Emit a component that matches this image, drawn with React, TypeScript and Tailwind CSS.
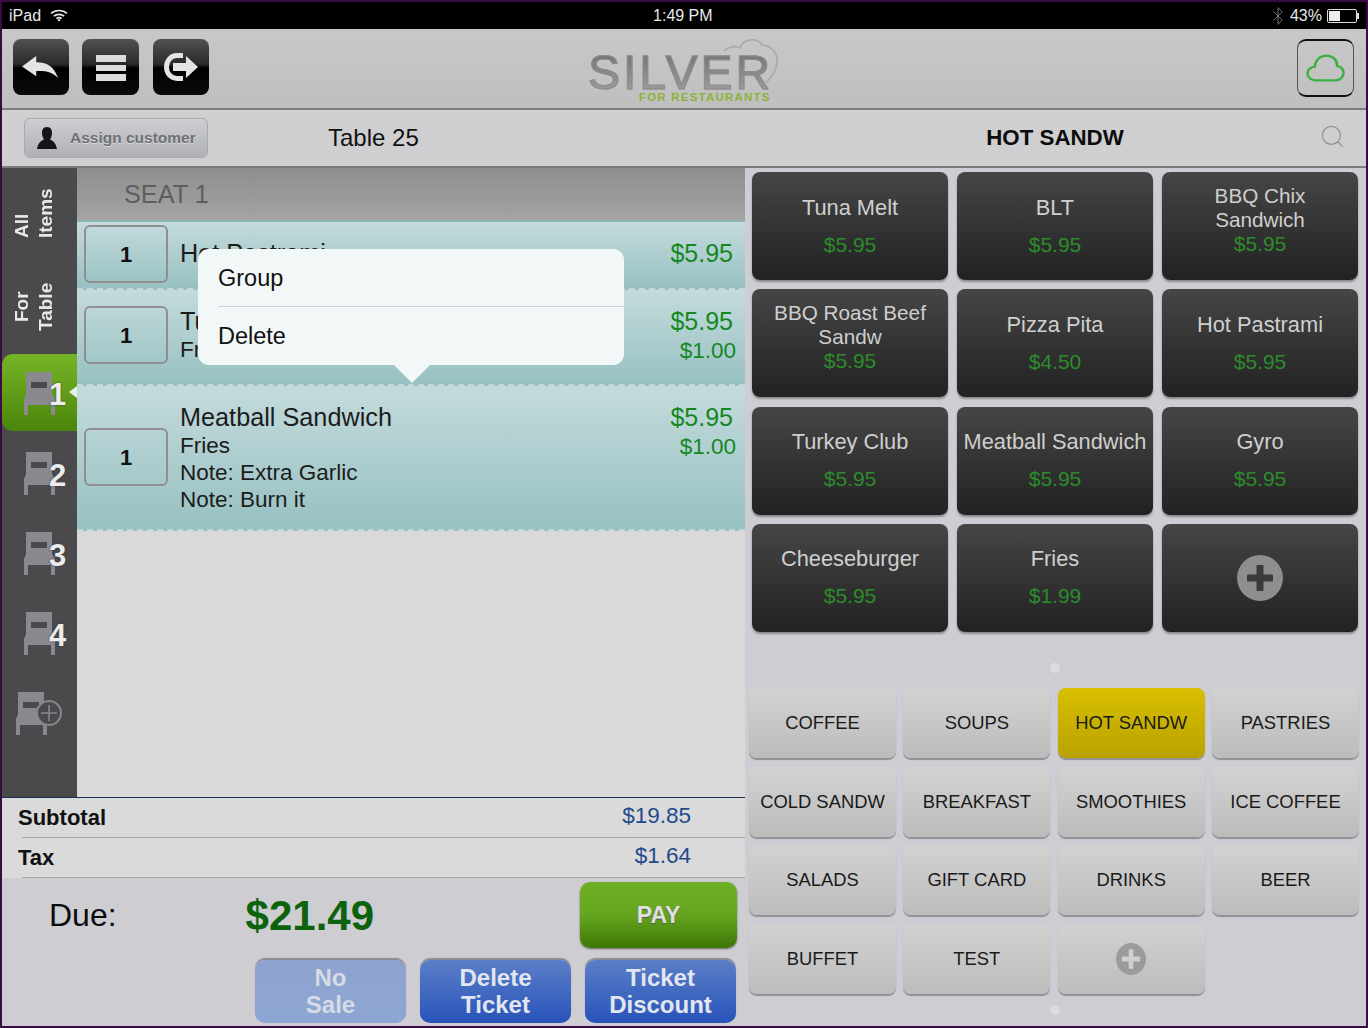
import React from "react";
import { Bluetooth, Search } from "lucide-react";

const Chair = () => (
  <svg width="32" height="43" viewBox="0 0 32 43" className="block">
    <path d="M3 0H29V22L32 27V43H28V33H5V43H1V27L3 22Z" fill="#8a8a8e" />
    <rect x="8" y="10" width="16" height="6" fill="#4a4a4c" />
  </svg>
);

const Seat = ({ n, active }: { n: number; active?: boolean }) => (
  <div
    className={
      active
        ? "relative h-[77px] pt-[18px] pl-[21px] rounded-l-[11px] bg-gradient-to-b from-[#75b526] to-[#4c860a]"
        : "relative h-[80px] pt-[21px] pl-[21px]"
    }
  >
    <Chair />
    <span
      className={
        "absolute left-[47px] text-[31px] leading-[31px] font-bold text-[#ececec] [text-shadow:0_0_2px_#333] " +
        (active ? "top-[25px]" : "top-[29px]")
      }
    >
      {n}
    </span>
    {active && (
      <span className="absolute right-0 top-[32px] border-y-[6px] border-r-[8px] border-y-transparent border-r-[#e4efe8]" />
    )}
  </div>
);

const Row = ({
  h,
  boxTop,
  lines,
  prices,
}: {
  h: string;
  boxTop: string;
  lines: string[];
  prices: string[];
}) => (
  <div
    className={
      "flex bg-gradient-to-b bg-origin-border from-[#c4dbdc] to-[#97c0c2] border-b-2 border-dashed border-[#c4d8d8] pl-[7px] pr-[9px] pt-[16px] " + h
    }
  >
    <div
      className={
        "w-[84px] h-[58px] shrink-0 border-2 border-[#8f8f8f] rounded-[6px] flex items-center justify-center text-[22px] font-bold text-[#111] " +
        boxTop
      }
    >
      1
    </div>
    <div className="ml-[12px] flex-1 text-[#1c1c1c]">
      {lines.map((l, i) => (
        <div key={l} className={i === 0 ? "text-[25.25px] leading-[30px]" : "text-[22.5px] leading-[27px]"}>
          {l}
        </div>
      ))}
    </div>
    <div className="text-right text-[#14881f]">
      {prices.map((p, i) => (
        <div key={p} className={i === 0 ? "text-[25px] leading-[30px] pr-[3px]" : "text-[22.5px] leading-[27px] pt-[1px]"}>
          {p}
        </div>
      ))}
    </div>
  </div>
);

const Product = ({ name, price }: { name: string; price: string }) => (
  <div className="h-[108px] rounded-[8px] bg-gradient-to-b from-[#464646] to-[#222222] shadow-[0_2px_2px_#8a8a8e] flex flex-col items-center justify-center text-center">
    <div className="text-[#cfcfcf] text-[21.8px] leading-[24px] max-w-[190px] whitespace-nowrap">{name}</div>
    <div className="text-[#2c8c2c] text-[21px] leading-[24px] mt-[13px]">{price}</div>
  </div>
);

const Product2 = ({ name, price }: { name: string[]; price: string }) => (
  <div className="h-[108px] rounded-[8px] bg-gradient-to-b from-[#464646] to-[#222222] shadow-[0_2px_2px_#8a8a8e] flex flex-col items-center pt-[12px] text-center">
    {name.map((n) => (
      <div key={n} className="text-[#cfcfcf] text-[20.7px] leading-[24px]">
        {n}
      </div>
    ))}
    <div className="text-[#2c8c2c] text-[21px] leading-[24px]">{price}</div>
  </div>
);

const PlusDisc = ({ w, h, bg, fg, t, l }: { w: number; h: number; bg: string; fg: string; t: number; l: number }) => (
  <svg width={w} height={h} viewBox="0 0 46 46" preserveAspectRatio="none">
    <circle cx="23" cy="23" r="23" fill={bg} />
    <rect x={23 - l / 2} y={23 - t / 2} width={l} height={t} rx="1" fill={fg} />
    <rect x={23 - t / 2} y={23 - l / 2} width={t} height={l} rx="1" fill={fg} />
  </svg>
);

const catBase = "h-[70px] rounded-[8px] shadow-[0_2px_1px_#8f8f95] flex items-center justify-center text-[18.4px] text-[#1a1a1a]";
const Cat = ({ name, active }: { name: string; active?: boolean }) => (
  <div className={catBase + (active ? " bg-gradient-to-b from-[#d8bf00] to-[#b9a200]" : " bg-gradient-to-b from-[#d2d2d2] to-[#bcbcbc]")}>
    {name}
  </div>
);

const BlueBtn = ({ a, b, off }: { a: string; b: string; off?: boolean }) => (
  <div
    className={
      "w-[151px] h-[63px] pb-[2px] rounded-[10px] flex flex-col items-center justify-center text-[24px] leading-[27px] font-bold shadow-[0_-2px_1px_#8c8c90] " +
      (off ? "bg-gradient-to-b from-[#8ea3cf] to-[#8ea6d4] text-[#d6dbe6]" : "bg-gradient-to-b from-[#5c7ec7] to-[#2753b9] text-[#e2e6ee]")
    }
  >
    <span>{a}</span>
    <span>{b}</span>
  </div>
);

const NavBtn = ({ w, children }: { w: string; children: React.ReactNode }) => (
  <div className={"h-[56px] rounded-[8px] bg-[linear-gradient(#525252,#2a2a2a_45%,#000_52%,#0a0a0a)] flex items-center justify-center " + w}>
    {children}
  </div>
);

export default function App() {
  return (
    <div className="w-[1368px] h-[1028px] bg-[#3a0a44] p-[2px] overflow-hidden font-['Liberation_Sans',Arial,sans-serif]">
      <div className="w-[1364px] h-[1024px] flex flex-col">
        {/* status bar */}
        <div className="h-[27px] bg-black text-[#e8e8e8] text-[16px] flex items-center pl-[7px] pr-[9px] shrink-0">
          <span>iPad</span>
          <svg width="18" height="13" viewBox="0 0 18 13" className="ml-[9px]">
            <path d="M1 4.5C5.5 .5 12.5 .5 17 4.5M3.8 7.2C6.8 4.7 11.2 4.7 14.2 7.2M6.4 9.6C8 8.4 10 8.4 11.6 9.6" fill="none" stroke="#e8e8e8" strokeWidth="1.6" />
            <path d="M7.4 11 9 9.8 10.6 11 9 12.6Z" fill="#e8e8e8" />
          </svg>
          <span className="ml-[585px]">1:49 PM</span>
          <Bluetooth size={20} strokeWidth={1} className="ml-auto text-[#8c8c8c]" />
          <span className="ml-[2px]">43%</span>
          <div className="ml-[5px] w-[30px] h-[14px] border border-[#ddd] rounded-[2px] p-[1px] relative">
            <div className="w-[11px] h-full bg-[#eee]" />
            <span className="absolute right-[-3px] top-[3px] w-[2px] h-[6px] bg-[#ddd]" />
          </div>
        </div>

        {/* header */}
        <div className="h-[81px] shrink-0 bg-gradient-to-b from-[#c8c8c8] to-[#bfbfbf] border-b-2 border-[#7d7d7d] flex items-center pl-[11px] pr-[10px]">
          <div className="flex items-center -mt-[3px]">
            <NavBtn w="w-[56px]">
              <svg width="38" height="23" viewBox="0 0 40 26" preserveAspectRatio="none">
                <path d="M0 12 15 0V7C28 7 34 13 38 25 32 18 25 16.5 15 17V23Z" fill="#e4e4e4" />
              </svg>
            </NavBtn>
            <div className="w-[57px] ml-[13px]">
              <NavBtn w="w-[57px]">
                <div className="flex flex-col gap-[3px] mt-[1px]">
                  <div className="w-[30px] h-[7px] bg-[#dcdcdc]" />
                  <div className="w-[30px] h-[6px] bg-[#dcdcdc]" />
                  <div className="w-[30px] h-[7px] bg-[#dcdcdc]" />
                </div>
              </NavBtn>
            </div>
            <div className="ml-[14px]">
              <NavBtn w="w-[56px]">
                <svg width="36" height="30" viewBox="0 0 36 30">
                  <path d="M20 3.500H14C8 3.500 3.500 8.500 3.500 15S8 26.500 14 26.500H20" fill="none" stroke="#e4e4e4" strokeWidth="5" />
                  <path d="M10 11H23V4L35 15 23 26V19H10Z" fill="#e4e4e4" />
                </svg>
              </NavBtn>
            </div>
          </div>
          <div className="relative ml-[379px] w-[190px] h-[72px] mt-[8px]">
            <svg width="62" height="50" viewBox="0 0 62 50" className="absolute left-[130px] top-0">
              <path d="M6 14C12 9 18 9 22 11 24 3 38 -1 44 8 52 8 60 16 59 24 59 32 54 40 48 46" fill="none" stroke="#a9a9a9" strokeWidth="1.6" />
            </svg>
            <div className="absolute left-0 top-[8px] text-[48px] leading-[56px] tracking-[3px] [-webkit-text-stroke:1px_#8c8c8c] bg-gradient-to-b from-[#6d6d6d] to-[#a7a7a7] bg-clip-text text-transparent">
              SILVER
            </div>
            <div className="absolute left-[51px] top-[53px] text-[11.5px] leading-[14px] font-bold tracking-[1.2px] text-[#8db238]">
              FOR RESTAURANTS
            </div>
          </div>
          <div className="ml-auto mr-[2px] -mt-[2px] w-[57px] h-[58px] border-x border-y-2 border-x-[#555] border-y-[#111] rounded-[9px] flex items-center justify-center">
            <svg width="39" height="28" viewBox="0 0 40 34" preserveAspectRatio="none">
              <path d="M10 32C4 32 1.500 27 1.500 23.500 1.500 19 5 15.500 9 15.500 9.500 8 14 2 21 2 28 2 32 8 32 14.500 36 15.500 38.500 19 38.500 23 38.500 28 35 32 30 32Z" fill="none" stroke="#3cb043" strokeWidth="2.6" />
            </svg>
          </div>
        </div>

        {/* sub bar */}
        <div className="h-[58px] shrink-0 flex border-b-2 border-[#7b7b7b] bg-[#cfcfd1]">
          <div className="w-[743px] flex items-center pl-[22px]">
            <div className="w-[184px] h-[40px] rounded-[6px] border border-[#a9a9ae] bg-gradient-to-b from-[#cfcfd2] to-[#aeb0b5] flex items-center pl-[11px]">
              <svg width="22" height="24" viewBox="0 0 22 24">
                <path d="M11 1C7 1 6 4 6 7 6 10 7 12 8 13.500 5 15 2 17 1 23H21C20 17 17 15 14 13.500 15 12 16 10 16 7 16 4 15 1 11 1Z" fill="#151515" />
              </svg>
              <span className="ml-[12px] text-[15.5px] font-bold text-[#6f7075] [text-shadow:0_1px_0_#dcdcdc]">Assign customer</span>
            </div>
            <span className="ml-[120px] text-[24px] text-[#111] -mt-[1px]">Table 25</span>
          </div>
          <div className="flex-1 flex items-center relative">
            <span className="w-full text-center text-[22.3px] text-[#0c0c0c] font-bold -mt-[1px] pr-[1px]">HOT SANDW</span>
            <Search size={27} strokeWidth={1} className="absolute right-[20px] top-[13px] text-[#8f8f94]" />
          </div>
        </div>

        {/* main */}
        <div className="flex-1 flex min-h-0">
          {/* left */}
          <div className="w-[743px] flex flex-col">
            <div className="h-[630px] flex shrink-0 bg-[#dadada] border-b border-[#1c2f55]">
              <div className="w-[75px] bg-[#4a4a4c] text-[#e8e8e8] text-[19px] leading-[24px] font-bold">
                <div className="h-[88px] pt-[20px] pl-[8px]">
                  <div className="[writing-mode:vertical-rl] rotate-180 h-[50px]">
                    <div>All</div>
                    <div>Items</div>
                  </div>
                </div>
                <div className="h-[98px] pt-[26px] pl-[8px]">
                  <div className="[writing-mode:vertical-rl] rotate-180 h-[50px] text-center">
                    <div>For</div>
                    <div>Table</div>
                  </div>
                </div>
                <Seat n={1} active />
                <Seat n={2} />
                <Seat n={3} />
                <Seat n={4} />
                <div className="relative h-[80px] pt-[21px] pl-[13px]">
                  <Chair />
                  <svg width="28" height="28" viewBox="0 0 28 28" className="absolute left-[33px] top-[28px]">
                    <circle cx="14" cy="14" r="12" fill="#4a4a4c" stroke="#88888c" strokeWidth="2" />
                    <path d="M14 6V22M6 14H22" stroke="#88888c" strokeWidth="1.600" />
                  </svg>
                </div>
              </div>
              <div className="flex-1 relative">
                <div className="h-[54px] pt-[2px] bg-gradient-to-b from-[#8e8e8e] to-[#a4a4a4] border-b-2 border-[#8cb4b6] pl-[47px] flex items-center text-[25.3px] text-[#5e5e5e]">
                  SEAT 1
                </div>
                <Row h="h-[68px]" boxTop="-mt-[13px]" lines={["Hot Pastrami"]} prices={["$5.95"]} />
                <Row h="h-[96px]" boxTop="" lines={["Tuna Melt", "Fries"]} prices={["$5.95", "$1.00"]} />
                <Row h="h-[145px]" boxTop="mt-[26px]" lines={["Meatball Sandwich", "Fries", "Note: Extra Garlic", "Note: Burn it"]} prices={["$5.95", "$1.00"]} />

                {/* popover */}
                <div className="absolute left-[121px] top-[81px] w-[426px] h-[116px] rounded-[11px] bg-[#f2f8f8] pl-[20px] text-[23.5px] text-[#111]">
                  <div className="h-[58px] pt-[2px] flex items-center border-b border-[#c9d2d8]">Group</div>
                  <div className="h-[58px] pt-[2px] flex items-center">Delete</div>
                  <span className="absolute left-[196px] top-[116px] border-x-[18px] border-t-[18px] border-x-transparent border-t-[#f2f8f8]" />
                </div>
              </div>
            </div>

            {/* totals */}
            <div className="h-[80px] shrink-0 bg-[#dadada]">
              <div className="h-[40px] flex items-center pl-[16px] pr-[54px] text-[22px] relative">
                <span className="font-bold text-[#111] -mt-[2px]">Subtotal</span>
                <span className="ml-auto text-[#1f4a8c] text-[22.5px] -mt-[4px]">$19.85</span>
                <span className="absolute left-[20px] right-0 bottom-0 h-px bg-[#a8a8a8]" />
              </div>
              <div className="h-[40px] flex items-center pl-[16px] pr-[54px] text-[22px] relative">
                <span className="font-bold text-[#111] -mt-[2px]">Tax</span>
                <span className="ml-auto text-[#1f4a8c] text-[22.5px] -mt-[4px]">$1.64</span>
                <span className="absolute left-[20px] right-0 bottom-0 h-px bg-[#a8a8a8]" />
              </div>
            </div>

            {/* due */}
            <div className="flex-1 bg-[#cdcdd2] pl-[47px] pr-[8px] pt-[4px]">
              <div className="flex items-center h-[66px]">
                <span className="text-[32px] text-[#0c0c0c]">Due:</span>
                <span className="ml-[129px] text-[42px] font-bold text-[#0d620d]">$21.49</span>
                <div className="ml-auto w-[157px] h-[66px] rounded-[10px] bg-gradient-to-b from-[#70b027] via-[#66a51f] to-[#3c7705] shadow-[0_1px_2px_#666] flex items-center justify-center text-[23px] font-bold text-[#e0e0e0] [text-shadow:0_1px_1px_#555]">
                  PAY
                </div>
              </div>
              <div className="flex justify-end gap-[14px] mt-[12px] pr-[1px]">
                <BlueBtn a="No" b="Sale" off />
                <BlueBtn a="Delete" b="Ticket" />
                <BlueBtn a="Ticket" b="Discount" />
              </div>
            </div>
          </div>

          {/* right */}
          <div className="flex-1 bg-[#cdcdd3]">
            <div className="grid grid-cols-[196px_196px_196px] gap-x-[9px] gap-y-[9.33px] pl-[7px] pt-[4px]">
              <Product name="Tuna Melt" price="$5.95" />
              <Product name="BLT" price="$5.95" />
              <Product2 name={["BBQ Chix", "Sandwich"]} price="$5.95" />
              <Product2 name={["BBQ Roast Beef", "Sandw"]} price="$5.95" />
              <Product name="Pizza Pita" price="$4.50" />
              <Product name="Hot Pastrami" price="$5.95" />
              <Product name="Turkey Club" price="$5.95" />
              <Product name="Meatball Sandwich" price="$5.95" />
              <Product name="Gyro" price="$5.95" />
              <Product name="Cheeseburger" price="$5.95" />
              <Product name="Fries" price="$1.99" />
              <div className="h-[108px] rounded-[8px] bg-gradient-to-b from-[#464646] to-[#222222] shadow-[0_2px_2px_#8a8a8e] flex items-center justify-center">
                <PlusDisc w={46} h={46} bg="#8e8e8e" fg="#3a3a3a" t={7} l={26} />
              </div>
            </div>
            <div className="w-[10px] h-[10px] rounded-full bg-[#dcdce0] ml-[305px] mt-[31px]" />
            <div className="grid grid-cols-[147px_147px_147px_147px] gap-x-[7.33px] gap-y-[8.67px] pl-[4px] mt-[15px]">
              {["COFFEE", "SOUPS", "HOT SANDW", "PASTRIES", "COLD SANDW", "BREAKFAST", "SMOOTHIES", "ICE COFFEE", "SALADS", "GIFT CARD", "DRINKS", "BEER", "BUFFET", "TEST"].map((c) => (
                <Cat key={c} name={c} active={c === "HOT SANDW"} />
              ))}
              <div className={catBase + " bg-gradient-to-b from-[#d2d2d2] to-[#bcbcbc]"}>
                <PlusDisc w={30} h={32} bg="#9b9b9b" fg="#d0d0d0" t={7} l={28} />
              </div>
            </div>
            <div className="w-[10px] h-[10px] rounded-full bg-[#dcdce0] ml-[305px] mt-[11px]" />
          </div>
        </div>
      </div>
    </div>
  );
}
